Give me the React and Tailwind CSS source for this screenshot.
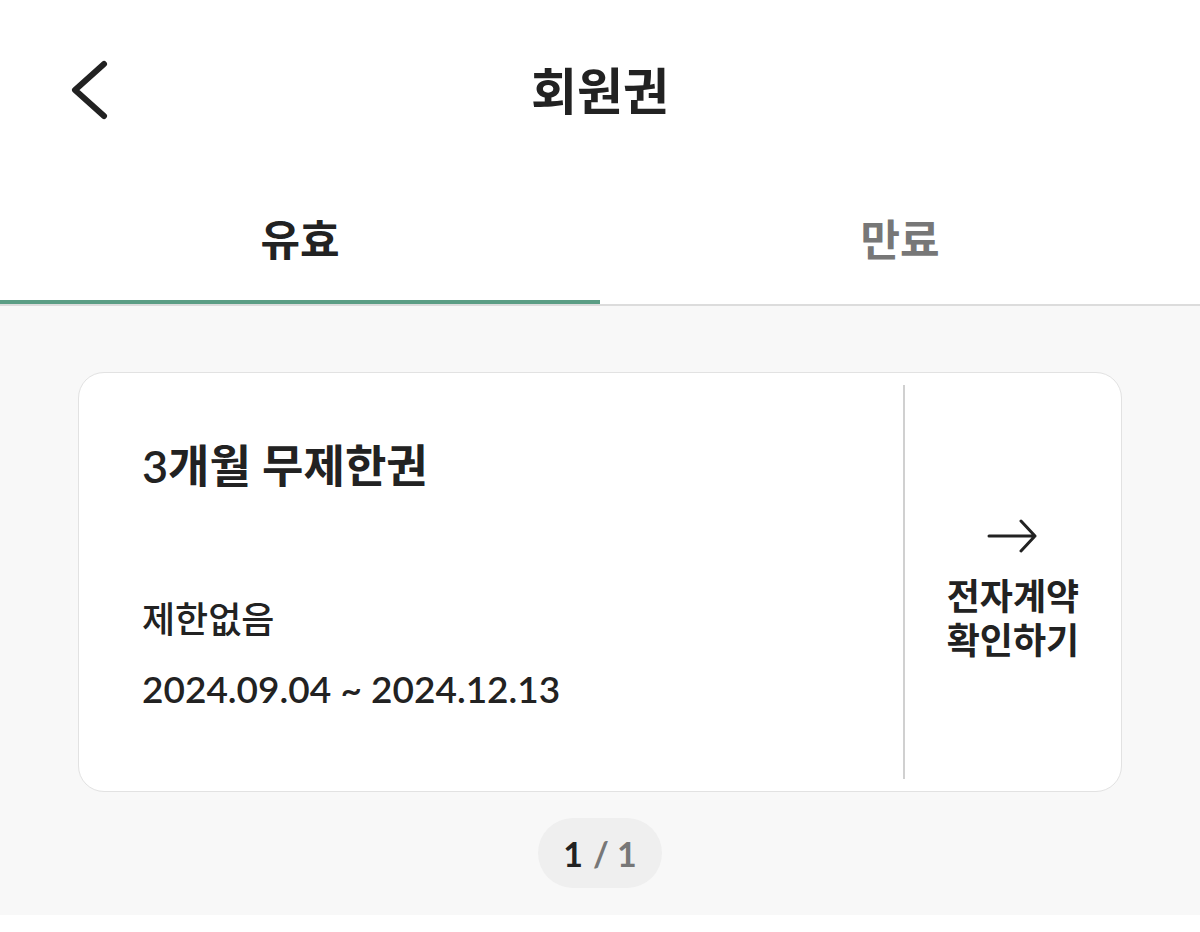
import React, { useState } from 'react';

const font = { fontFamily: 'Lato, "Noto Sans CJK KR", "Noto Sans", sans-serif' };

const App = () => {
    const [tab, setTab] = useState('active');

    return (
        <div className="w-[1200px] h-[932px] bg-white text-[#222]" style={font}>
            {/* header */}
            <div className="relative h-[180px] flex items-start justify-center">
                <button className="absolute left-[68px] top-[56px]">
                    <svg width="44" height="68" viewBox="0 0 44 68" fill="none">
                        <path d="M36 8 L7 34 L36 60" stroke="#222" strokeWidth="6" strokeLinecap="round" strokeLinejoin="round" />
                    </svg>
                </button>
                <h1 className="mt-[60px] text-[50px] leading-[62px] font-bold">회원권</h1>
            </div>

            {/* tabs */}
            <div className="flex border-b-2 border-[#dcdcdc]">
                <button
                    onClick={() => setTab('active')}
                    className={`flex-1 h-[124px] flex items-center justify-center text-[43px] font-bold border-b-4 ${tab === 'active' ? 'border-[#5b9e85] text-[#222]' : 'border-transparent text-[#777]'}`}
                >
                    유효
                </button>
                <button
                    onClick={() => setTab('expired')}
                    className={`flex-1 h-[124px] flex items-center justify-center text-[43px] font-bold border-b-4 ${tab === 'expired' ? 'border-[#5b9e85] text-[#222]' : 'border-transparent text-[#777]'}`}
                >
                    만료
                </button>
            </div>

            {/* list */}
            <div className="bg-[#f8f8f8] pt-[66px] pb-[27px] px-[78px] flex flex-col items-center">
                <div className="w-full h-[420px] bg-white border border-[#e2e2e2] rounded-[26px] flex">
                    <div className="flex-1 pl-[63px] pt-[65px] flex flex-col">
                        <div className="text-[45px] leading-[56px] font-semibold">3개월 무제한권</div>
                        <div className="mt-[101px] text-[36px] leading-[48px] font-medium">제한없음</div>
                        <div className="mt-[22px] text-[37px] leading-[48px] font-semibold">2024.09.04 ~ 2024.12.13</div>
                    </div>
                    <div className="my-[12px] w-[2px] bg-[#d0d0d0]"></div>
                    <div className="w-[216px] flex flex-col items-center justify-center pt-[16px]">
                        <svg width="52" height="36" viewBox="0 0 52 36" fill="none">
                            <path d="M2 18 H48 M34 3 L48 18 L34 33" stroke="#222" strokeWidth="3" strokeLinecap="round" strokeLinejoin="round" />
                        </svg>
                        <div className="mt-[20px] text-[36px] leading-[44px] font-semibold text-center">
                            전자계약
                            <br />
                            확인하기
                        </div>
                    </div>
                </div>
                <div className="mt-[26px] h-[70px] w-[124px] rounded-full bg-[#efefef] flex items-center justify-center text-[34px] font-bold">
                    <span className="text-[#222]">1</span>
                    <span className="ml-[10px] text-[#777]">/ 1</span>
                </div>
            </div>
        </div>
    );
};

export default App;
